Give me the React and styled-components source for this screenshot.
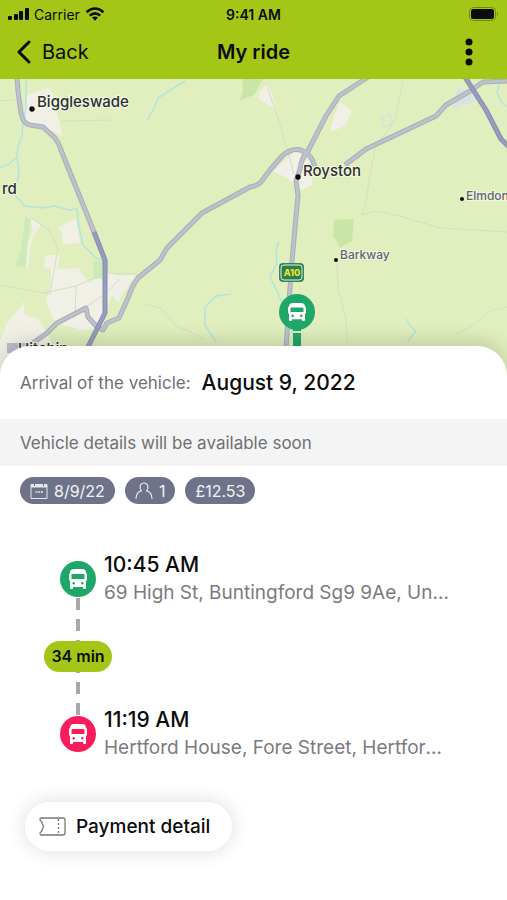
import React from 'react';
import styled, { createGlobalStyle } from 'styled-components';

const GlobalStyle = createGlobalStyle`
  * {
    box-sizing: border-box;
  }

  body {
    margin: 0;
    background: white;
    color: #0c0c0c;
    font-family: Inter, 'Liberation Sans', sans-serif;
  }

  h1, h2, p, ol {
    margin: 0;
    padding: 0;
  }

  button {
    border: 0;
    padding: 0;
    background: none;
    color: inherit;
    font-family: inherit;
    cursor: pointer;
  }

  svg {
    display: block;
    flex-shrink: 0;
  }
`

const Header = styled.header`
  background: #a4c616;
`

const StatusBar = styled.div`
  display: grid;
  grid-template-columns: 1fr auto 1fr;
  align-items: center;
  height: 28px;
  padding: 0 8px;
  font-size: 14px;
`

const Signal = styled.div`
  display: flex;
  align-items: center;
  gap: 5px;
`

const Clock = styled.span`
  font-weight: 600;
`

const Battery = styled.div`
  justify-self: end;
`

const NavBar = styled.nav`
  display: grid;
  grid-template-columns: 1fr auto 1fr;
  align-items: center;
  height: 51px;
  padding: 0 16px 4px;
`

const BackLink = styled.a`
  display: flex;
  align-items: center;
  gap: 10px;
  color: inherit;
  font-size: 20px;
  text-decoration: none;
`

const Title = styled.h1`
  font-size: 20px;
  font-weight: 600;
`

const MenuButton = styled.button`
  display: grid;
  place-items: center;
  justify-self: end;
  width: 44px;
`

const Map = styled.svg`
  width: 100%;
  height: 300px;
  background: #e0efbd;
`

const Place = styled.text`
  font-size: ${props => props.$small ? '12px' : '15px'};
  font-weight: 500;
  fill: ${props => props.$small ? '#62656e' : '#2c2f33'};
  stroke: #f2f7e2;
  stroke-width: 2px;
  paint-order: stroke;
`

const RoadNumber = styled.text`
  font-size: 9px;
  font-weight: 800;
  fill: #f5e32c;
  text-anchor: middle;
`

const Sheet = styled.main`
  position: relative;
  margin-top: -33px;
  padding-bottom: 48px;
  border-radius: 30px 30px 0 0;
  background: white;
  box-shadow: 0 -4px 20px rgba(0, 0, 0, 0.16);
`

const Arrival = styled.div`
  display: flex;
  align-items: center;
  gap: 11px;
  height: 73px;
  padding: 0 20px;
`

const Label = styled.p`
  color: #6f6f72;
  font-size: 17px;
`

const ArrivalDate = styled.h2`
  font-size: 21px;
  font-weight: 500;
`

const Notice = styled.div`
  display: flex;
  align-items: center;
  height: 47px;
  padding: 0 20px;
  background: #f4f4f4;
`

const Chips = styled.div`
  display: flex;
  gap: 10px;
  padding: 11px 20px 0;
`

const Chip = styled.span`
  display: flex;
  align-items: center;
  gap: 6px;
  height: 27px;
  padding: 0 10px;
  border-radius: 14px;
  background: #6f7389;
  color: #f3f3f7;
  font-size: 16px;
`

const Route = styled.ol`
  padding: 47px 56px 0 60px;
  list-style: none;
`

const Stop = styled.li`
  position: relative;
  display: flex;
  align-items: center;
  gap: 8px;
`

const StopIcon = styled.span`
  display: grid;
  place-items: center;
  flex-shrink: 0;
  width: 36px;
  height: 36px;
  border-radius: 50%;
  background: ${props => props.$end ? '#fb1d5b' : '#1fa76a'};
`

const StopText = styled.div`
  min-width: 0;
`

const Time = styled.p`
  font-size: 21px;
  font-weight: 500;
  line-height: 28px;
`

const Address = styled.p`
  overflow: hidden;
  color: #7b7b7e;
  font-size: 19px;
  line-height: 28px;
  text-overflow: ellipsis;
  white-space: nowrap;
`

const Leg = styled.li`
  display: flex;
  align-items: center;
  justify-content: center;
  width: 68px;
  height: 117px;
  margin: -9px 0 -9px -16px;
  background: repeating-linear-gradient(#a9a9ac 0 12px, transparent 12px 21px) center / 4px 100% no-repeat;
`

const Duration = styled.span`
  width: 100%;
  border-radius: 16px;
  background: #a4c616;
  font-size: 16px;
  font-weight: 600;
  line-height: 31px;
  text-align: center;
`

const PaymentButton = styled.button`
  display: flex;
  align-items: center;
  gap: 10px;
  height: 49px;
  margin: 40px 0 0 25px;
  padding: 0 22px 0 14px;
  border-radius: 25px;
  background: white;
  box-shadow: 0 0 20px rgba(0, 0, 0, 0.14);
  font-size: 19px;
  font-weight: 500;
`

const busPath = 'M5 0H13Q17 0 17 4Q18 4 18 6V10Q18 12 17 12V17V19Q17 20 16 20H15Q14 20 14 19V18H4V19Q4 20 3 20H2Q1 20 1 19V12Q0 12 0 10V6Q0 4 1 4Q1 0 5 0Z M3.5 5Q2.5 5 2.5 6V10H15.5V6Q15.5 5 14.5 5Z M4.7 12.9A1.3 1.3 0 1 0 4.7 15.5A1.3 1.3 0 1 0 4.7 12.9Z M13.3 12.9A1.3 1.3 0 1 0 13.3 15.5A1.3 1.3 0 1 0 13.3 12.9Z'

const BusIcon = () => (
  <svg width="18" height="20" viewBox="0 0 18 20">
    <path d={busPath} fill="white" fillRule="evenodd" />
  </svg>
)

const majorRoads = [
  'M17 -2L18 12L21 34Q23 45 30 46L43 48L55 59Q59 64 61 71L88 138L94 153',
  'M315 88Q312 75 301 71Q291 69 282 77L270 91L261 103Q257 107 250 108L202 134L167 169L160 181L138 199Q132 207 128 219L119 239L107 244L103 251L97 248L88 238L86 229L57 244L47 254L33 264',
  'M368 -2L339 17L326 37L308 72Q301 80 300 90L296 102L298 116L296 138L291 193L286 270',
  'M345 86L366 70L436 37L446 26L470 12L483 3L510 2',
]

const trunkRoads = [
  'M94 153L105 181L105 234L88 268',
  'M465 -2L486 31L501 60L510 69',
]

const streams = [
  'M185 2L172 10L158 19L154 29L147 42',
  'M26 0L26 28L23 45L22 57L18 67L17 78L9 85L0 89',
  'M17 78L19 95L14 115L25 127L42 129L55 127L69 131L77 130L79 148L83 166L96 179L105 182',
  'M231 215L216 217L205 228L205 246L216 263',
  'M278 163L276 174L277 184L270 198L276 210L283 226L290 248L294 256',
  'M406 240L410 247L416 252L408 262',
  'M500 0L497 14L502 24L507 28',
]

const lanes = [
  'M266 4L278 40L288 72L294 96',
  'M403 2L395 40L375 70L366 120L362 136L377 132L400 137L440 149L507 153',
  'M337 182L338 210L346 240L347 262',
  'M0 22L22 20M62 42L110 41',
  'M30 138L48 150L58 168L50 215L0 206M44 214L76 207L105 194L137 195M76 207L75 238',
  'M145 225L162 230L175 246L205 260M455 256L474 245L490 232L507 228',
  'M80 232L105 215L120 200',
]

const RouteMap = () => (
  <Map viewBox="0 0 507 300" preserveAspectRatio="xMidYMin slice" role="img" aria-label="Route map">
    <g fill="#f0f0e6">
      <path d="M27 16L48 9L53 14L56 30L63 57L44 48L28 45L23 37Z" />
      <path d="M295 72L273 92L285 98L302 111L312 106L312 84Z" />
      <path d="M259 14L267 4L271 12L276 31L259 20Z" />
      <path d="M340 23L352 32L345 47L330 53L334 37Z" />
      <path d="M29 138L41 146L34 155L31 166L28 190L26 188L28 164L33 151Z" />
      <path d="M58 149L68 143L76 139L80 164L63 166L62 154Z" />
      <path d="M46 176L60 176L57 190L78 189L89 204L104 192L119 197L136 196L123 214L118 224L112 216L107 228L103 249L82 251L55 244L46 222L51 206L51 190L44 188Z" />
      <path d="M8 242L19 230L24 222L24 235L38 240L47 254L52 264L38 300L0 300L0 262Z" />
    </g>
    <g fill="#c9e6a6">
      <path d="M242 0H263L254 16L240 21L243 12Z" />
      <path d="M334 141L354 140L352 162L340 169L336 161L333 157Z" />
    </g>
    <g fill="#cdebb9">
      <path d="M25 138L31 140L27 165L26 187L15 188L22 165Z" />
      <path d="M93 182L109 182L108 199L94 200Z" />
    </g>
    <path d="M452 31L458 8L480 20L462 27Z" fill="#d8e4e4" />
    <path d="M382 39L390 35L392 46L383 48Z" fill="none" stroke="#dce5cf" strokeWidth="2" />
    <path d="M7 264H35L32 274H7Z" fill="#bcbccd" />
    <g fill="none" stroke="#d6dec6" strokeWidth="1">
      {lanes.map(d => <path key={d} d={d} />)}
    </g>
    <g fill="none" stroke="#b4e4dc" strokeWidth="1.5" strokeLinejoin="round">
      {streams.map(d => <path key={d} d={d} />)}
    </g>
    <g fill="none" strokeLinejoin="round">
      {majorRoads.map(d => <path key={d} d={d} stroke="#a9aeb7" strokeWidth="5" />)}
      {majorRoads.map(d => <path key={d} d={d} stroke="#bcc1cb" strokeWidth="3" />)}
      {trunkRoads.map(d => <path key={d} d={d} stroke="#858db1" strokeWidth="5" />)}
      {trunkRoads.map(d => <path key={d} d={d} stroke="#969dbd" strokeWidth="3" />)}
    </g>

    <g fill="#0c0c0c">
      <circle cx="32" cy="30" r="2.7" />
      <circle cx="298" cy="98" r="2.7" />
      <circle cx="462" cy="120" r="2" />
      <circle cx="336" cy="181" r="2" />
    </g>
    <Place x="37" y="28">Biggleswade</Place>
    <Place x="303" y="97">Royston</Place>
    <Place x="2" y="115">rd</Place>
    <Place x="18" y="275">Hitchin</Place>
    <Place $small x="466" y="121">Elmdon</Place>
    <Place $small x="340" y="180">Barkway</Place>

    <rect x="279" y="184" width="25" height="19" rx="4" fill="#34835a" />
    <rect x="281" y="186" width="21" height="15" rx="3" fill="#2a8050" stroke="#e3f0d6" />
    <RoadNumber x="292" y="197">A10</RoadNumber>

    <path d="M297 250V300" stroke="#1fa76a" strokeWidth="8" />
    <path d="M293 253H301" stroke="#e0efbd" strokeWidth="2" />
    <circle cx="297" cy="233" r="18" fill="#1fa76a" />
    <g transform="translate(288 224) scale(1 0.9)">
      <path d={busPath} fill="white" fillRule="evenodd" />
    </g>
  </Map>
)

const App = () => (
  <>
    <GlobalStyle />
    <Header>
      <StatusBar>
        <Signal>
          <svg width="21" height="14" viewBox="0 0 21 14" fill="#0c0c0c">
            <rect x="0" y="9" width="4" height="4" rx="1" />
            <rect x="6" y="7" width="4" height="6" rx="1" />
            <rect x="11" y="4" width="4" height="9" rx="1" />
            <rect x="17" y="1" width="4" height="12" rx="1" />
          </svg>
          Carrier
          <svg width="20" height="14" viewBox="0 0 20 14" fill="none" stroke="#0c0c0c" strokeWidth="2.6">
            <path d="M1.5 5.2Q10 -2.2 18.5 5.2" />
            <path d="M4.8 8.6Q10 4 15.2 8.6" />
            <path d="M7 10.6Q10 8.4 13 10.6L10 13.8Z" fill="#0c0c0c" stroke="none" />
          </svg>
        </Signal>
        <Clock>9:41 AM</Clock>
        <Battery>
          <svg width="30" height="14" viewBox="0 0 30 14">
            <rect x="0.5" y="0.5" width="26" height="13" rx="4" fill="none" stroke="#6f8712" />
            <rect x="2" y="2" width="23" height="10" rx="2.5" fill="#0c0c0c" />
            <path d="M28 5Q30 7 28 9Z" fill="#6f8712" />
          </svg>
        </Battery>
      </StatusBar>
      <NavBar>
        <BackLink href="#rides">
          <svg width="16" height="24" viewBox="0 0 16 24" fill="none" stroke="#0c0c0c" strokeWidth="3" strokeLinecap="round" strokeLinejoin="round">
            <path d="M13 2L3 12L13 22" />
          </svg>
          Back
        </BackLink>
        <Title>My ride</Title>
        <MenuButton aria-label="More options">
          <svg width="20" height="28" viewBox="0 0 20 28" fill="#0c0c0c">
            <circle cx="10" cy="4" r="3.5" />
            <circle cx="10" cy="14" r="3.5" />
            <circle cx="10" cy="24" r="3.5" />
          </svg>
        </MenuButton>
      </NavBar>
    </Header>

    <RouteMap />

    <Sheet>
      <Arrival>
        <Label>Arrival of the vehicle:</Label>
        <ArrivalDate>August 9, 2022</ArrivalDate>
      </Arrival>
      <Notice>
        <Label>Vehicle details will be available soon</Label>
      </Notice>
      <Chips>
        <Chip>
          <svg width="18" height="18" viewBox="0 0 18 18" fill="none" stroke="#e6e7ee">
            <path d="M1 2.5H17V16.5H1Z" />
            <path d="M1 4H17" strokeWidth="3" />
            <path d="M4.5 0.5V4M13.5 0.5V4" stroke="#6f7389" />
            <path d="M5.5 10H13" strokeWidth="1.5" strokeDasharray="2 0.7" />
          </svg>
          8/9/22
        </Chip>
        <Chip>
          <svg width="18" height="18" viewBox="0 0 18 18" fill="none" stroke="#e6e7ee" strokeWidth="1.2" strokeLinecap="round">
            <path d="M6.5 8.6C4.2 6.8 4.4 1 9 1S13.8 6.8 11.5 8.6" />
            <path d="M6.5 8.6Q1.2 10.2 1 16.5M11.5 8.6Q16.8 10.2 17 16.5" />
          </svg>
          1
        </Chip>
        <Chip>£12.53</Chip>
      </Chips>

      <Route>
        <Stop>
          <StopIcon><BusIcon /></StopIcon>
          <StopText>
            <Time>10:45 AM</Time>
            <Address>69 High St, Buntingford Sg9 9Ae, United Kingdom</Address>
          </StopText>
        </Stop>
        <Leg>
          <Duration>34 min</Duration>
        </Leg>
        <Stop>
          <StopIcon $end><BusIcon /></StopIcon>
          <StopText>
            <Time>11:19 AM</Time>
            <Address>Hertford House, Fore Street, Hertford, United Kingdom</Address>
          </StopText>
        </Stop>
      </Route>

      <PaymentButton>
        <svg width="27" height="19" viewBox="0 0 27 19" fill="none" stroke="#77777a" strokeWidth="1.3">
          <path d="M2 1H24Q26 1 26 3V16Q26 18 24 18H2Q1 18 1 16.5Q1 15 2.5 14.5Q3.5 14 3 13L4.5 9.5L3 6Q3.5 5 2.5 4.5Q1 4 1 2.5Q1 1 2 1Z" />
          <path d="M19.5 2V18" strokeDasharray="2 2" />
        </svg>
        Payment detail
      </PaymentButton>
    </Sheet>
  </>
)

export default App;
